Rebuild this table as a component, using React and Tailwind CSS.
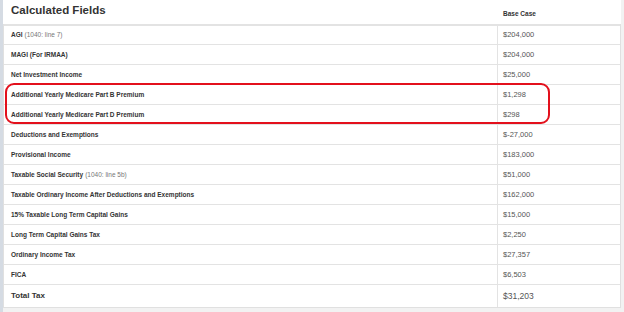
const rows = [
  { label: "AGI", note: "(1040: line 7)", value: "$204,000" },
  { label: "MAGI (For IRMAA)", value: "$204,000" },
  { label: "Net Investment Income", value: "$25,000" },
  { label: "Additional Yearly Medicare Part B Premium", value: "$1,298" },
  { label: "Additional Yearly Medicare Part D Premium", value: "$298" },
  { label: "Deductions and Exemptions", value: "$-27,000" },
  { label: "Provisional Income", value: "$183,000" },
  { label: "Taxable Social Security", note: "(1040: line 5b)", value: "$51,000" },
  { label: "Taxable Ordinary Income After Deductions and Exemptions", value: "$162,000" },
  { label: "15% Taxable Long Term Capital Gains", value: "$15,000" },
  { label: "Long Term Capital Gains Tax", value: "$2,250" },
  { label: "Ordinary Income Tax", value: "$27,357" },
  { label: "FICA", value: "$6,503" },
];

export default function App() {
  return (
    <div
      className="w-[624px] h-[312px] bg-[#f2f2f2] flex overflow-hidden"
      style={{ fontFamily: '"Liberation Sans", Arial, sans-serif' }}
    >
      <div className="w-[3px] bg-[#d5dbe3]" />
      <div className="w-[618px] flex flex-col">
        <div className="bg-white">
          {/* heading row */}
          <div className="h-[24px] flex">
            <div className="w-[494px] pl-[8px] pt-[2px] text-[11.5px] font-bold text-[#333] leading-[16px]">
              Calculated Fields
            </div>
            <div className="flex-1 pl-[6px] pt-[9px] text-[6.5px] font-bold text-[#333] leading-[10px]">
              Base Case
            </div>
          </div>
          {/* table body */}
          <div className="relative border-x border-b border-[#e0e0e0]">
            {rows.map((r, i) => (
              <div
                key={r.label}
                className={`grid grid-cols-[493px_1fr] h-[20px] border-t border-[#e3e3e3] ${i === 0 ? "border-t-2" : ""}`}
              >
                <div className="pl-[7px] flex items-center text-[6.5px] font-bold text-[#333]">
                  {r.label}
                  {r.note && (
                    <span className="ml-[2px] font-normal text-[6.5px] text-[#777]">{r.note}</span>
                  )}
                </div>
                <div className="border-l border-[#e3e3e3] pl-[5px] flex items-center text-[7.5px] text-[#555]">
                  {r.value}
                </div>
              </div>
            ))}
            <div className="grid grid-cols-[493px_1fr] h-[23px] border-t border-[#e3e3e3]">
              <div className="pl-[7px] flex items-center text-[8px] font-bold text-[#333]">
                Total Tax
              </div>
              <div className="border-l border-[#e3e3e3] pl-[5px] flex items-center text-[8.5px] text-[#555]">
                $31,203
              </div>
            </div>
            {/* highlight around the Medicare premium rows */}
            <div className="absolute left-[1px] top-[59px] w-[545px] h-[41px] border-2 border-[#e3101c] rounded-[9px] pointer-events-none" />
          </div>
        </div>
      </div>
    </div>
  );
}
